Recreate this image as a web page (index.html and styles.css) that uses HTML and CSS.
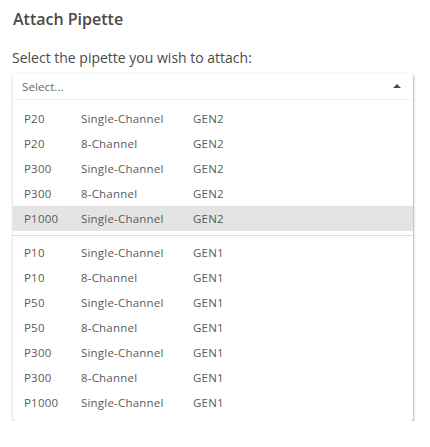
FILE: index.html
```html
<!DOCTYPE html>
<html>
<head>
<meta charset="utf-8">
<link rel="stylesheet" href="styles.css">
</head>
<body>
<div class="page">
  <h3 class="title">Attach Pipette</h3>
  <p class="label">Select the pipette you wish to attach:</p>
  <div class="dropdown">
    <div class="control">
      <span class="placeholder">Select...</span>
      <span class="caret"></span>
    </div>
    <div class="group">
      <div class="opt"><span class="c1">P20</span><span class="c2">Single-Channel</span><span class="c3">GEN2</span></div>
      <div class="opt"><span class="c1">P20</span><span class="c2">8-Channel</span><span class="c3">GEN2</span></div>
      <div class="opt"><span class="c1">P300</span><span class="c2">Single-Channel</span><span class="c3">GEN2</span></div>
      <div class="opt"><span class="c1">P300</span><span class="c2">8-Channel</span><span class="c3">GEN2</span></div>
      <div class="opt active"><span class="c1">P1000</span><span class="c2">Single-Channel</span><span class="c3">GEN2</span></div>
    </div>
    <div class="divider"></div>
    <div class="group last">
      <div class="opt"><span class="c1">P10</span><span class="c2">Single-Channel</span><span class="c3">GEN1</span></div>
      <div class="opt"><span class="c1">P10</span><span class="c2">8-Channel</span><span class="c3">GEN1</span></div>
      <div class="opt"><span class="c1">P50</span><span class="c2">Single-Channel</span><span class="c3">GEN1</span></div>
      <div class="opt"><span class="c1">P50</span><span class="c2">8-Channel</span><span class="c3">GEN1</span></div>
      <div class="opt"><span class="c1">P300</span><span class="c2">Single-Channel</span><span class="c3">GEN1</span></div>
      <div class="opt"><span class="c1">P300</span><span class="c2">8-Channel</span><span class="c3">GEN1</span></div>
      <div class="opt"><span class="c1">P1000</span><span class="c2">Single-Channel</span><span class="c3">GEN1</span></div>
    </div>
  </div>
</div>
</body>
</html>
```
FILE: styles.css
```css
html, body {
  margin: 0;
  padding: 0;
  background: #fff;
}
body {
  font-family: "Open Sans", "Liberation Sans", sans-serif;
  color: #4a4a4a;
}
.page {
  padding: 7px 17px 0 13px;
}
.title {
  margin: 0;
  font-size: 16px;
  font-weight: 600;
  line-height: 24px;
}
.label {
  margin: 17px 0 0 -1px;
  font-size: 14px;
  line-height: 20px;
}
.dropdown {
  margin-top: 5px;
  border-radius: 3px;
  background: #fff;
  box-shadow: 0 1px 3px rgba(0,0,0,0.22), 1px 2px 2px rgba(0,0,0,0.2);
  padding-bottom: 6px;
}
.control {
  height: 26px;
  display: flex;
  align-items: center;
  justify-content: space-between;
  padding: 0 12px 0 9px;
  border-bottom: 1px solid #f2f2f2;
}
.placeholder {
  font-size: 11.5px;
  color: #666;
  letter-spacing: 0.1px;
}
.caret {
  width: 0;
  height: 0;
  border-left: 4px solid transparent;
  border-right: 4px solid transparent;
  border-bottom: 4px solid #4a4a4a;
}
.group {
  padding-top: 6px;
}
.group.last {
  padding-top: 4px;
}
.opt {
  display: flex;
  height: 25px;
  align-items: center;
  font-size: 11.5px;
  letter-spacing: 0.2px;
  color: #5a5a5a;
  padding-left: 11px;
}
.opt.active {
  background: #e4e4e4;
}
.c1 { width: 57px; }
.c2 { width: 112px; }
.divider {
  margin-top: 4px;
  height: 1px;
  background: #ddd;
}
```
